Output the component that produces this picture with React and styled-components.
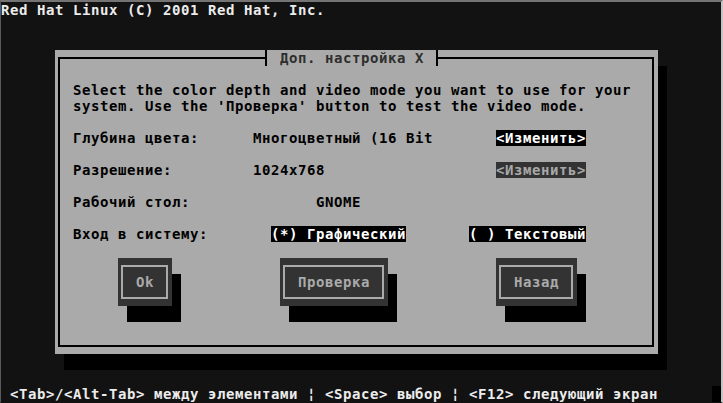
import React from 'react';
import styled, { createGlobalStyle, css } from 'styled-components';

// 80x25 text console, every cell is 9x16 px
const Global = createGlobalStyle`
  html, body {
    margin: 0;
    padding: 0;
    background: #121212;
  }
  body {
    width: 723px;
    height: 403px;
    overflow: hidden;
  }
`;

const Monitor = styled.div`
  width: 723px;
  height: 403px;
  box-sizing: border-box;
  border-top: 2px solid #747474;
  border-left: 1px solid #5a5a5a;
  border-right: 2px solid #c4c4c4;
  border-bottom: 1px solid #121212;
  background: #121212;
`;

const Screen = styled.div`
  display: grid;
  grid-template-columns: repeat(80, 9px);
  grid-template-rows: repeat(25, 16px);
  font-family: "DejaVu Sans Mono", "Liberation Mono", monospace;
  font-size: 14px;
  letter-spacing: 0.57px;
  font-weight: bold;
  line-height: 16px;
  color: #ececec;
  white-space: pre;
`;

const Banner = styled.div`
  grid-column: 1 / span 80;
  grid-row: 1;
`;

const HelpLine = styled.div`
  grid-column: 1 / span 79;
  grid-row: 25;
`;

const Cursor = styled.div`
  grid-column: 80;
  grid-row: 25;
  background: #000;
`;

const Dialog = styled.section`
  grid-column: 7 / span 67;
  grid-row: 4 / span 19;
  position: relative;
  display: grid;
  grid-template-columns: repeat(67, 9px);
  grid-template-rows: repeat(19, 16px);
  background: #aaaaaa;
  color: #000;
  box-shadow: 9px 16px 0 #000;

  &::before {
    content: '';
    position: absolute;
    left: 3px;
    right: 4px;
    top: 7px;
    bottom: 7px;
    border: 2px solid #000;
  }
`;

const Title = styled.h1`
  grid-column: 25 / span 18;
  grid-row: 1;
  position: relative;
  z-index: 1;
  margin: 0;
  font: inherit;
  color: #2e2e2e;
  background: #aaaaaa;

  &::before,
  &::after {
    content: '';
    position: absolute;
    top: 0;
    bottom: 0;
    box-sizing: border-box;
    background: #aaaaaa;
  }
  &::before {
    left: -6px;
    width: 6px;
    border-left: 2px solid #000;
  }
  &::after {
    left: 100%;
    width: 5px;
    border-right: 2px solid #000;
  }
`;

const tones = {
  plain: css`
    color: #000;
  `,
  focus: css`
    background: #000;
    color: #fff;
  `,
  dim: css`
    background: #333;
    color: #a8a8a8;
  `,
};

const Text = styled.span`
  grid-column: ${p => p.$col} / span ${p => p.$span};
  grid-row: ${p => p.$row};
  position: relative;
  z-index: 1;
  ${p => tones[p.$tone]}
`;

const Cell = ({ col, row, tone = 'plain', children }) => (
  <Text $col={col} $row={row} $span={children.length} $tone={tone}>
    {children}
  </Text>
);

const Button = styled.div`
  grid-column: ${p => p.$col} / span ${p => p.$span};
  grid-row: 14 / span 3;
  position: relative;
  z-index: 1;
  display: flex;
  align-items: center;
  justify-content: center;
  background: #333;
  color: #aaaaaa;
  box-shadow: 9px 16px 0 #000;

  &::before {
    content: '';
    position: absolute;
    left: 3px;
    right: 4px;
    top: 7px;
    bottom: 7px;
    border: 2px solid #aaaaaa;
  }
`;

const fields = [
  { row: 6, label: 'Глубина цвета:', value: 'Многоцветный (16 Bit', valueCol: 23, action: 'focus' },
  { row: 8, label: 'Разрешение:', value: '1024x768', valueCol: 23, action: 'dim' },
  { row: 10, label: 'Рабочий стол:', value: 'GNOME', valueCol: 30 },
];

const buttons = [
  { col: 8, span: 6, label: 'Ok' },
  { col: 26, span: 12, label: 'Проверка' },
  { col: 50, span: 9, label: 'Назад' },
];

export default function App() {
  return (
    <>
      <Global />
      <Monitor>
        <Screen>
          <Banner>Red Hat Linux (C) 2001 Red Hat, Inc.</Banner>

          <Dialog>
            <Title> Доп. настройка X </Title>

            <Cell col={3} row={3}>
              Select the color depth and video mode you want to use for your
            </Cell>
            <Cell col={3} row={4}>
              system. Use the 'Проверка' button to test the video mode.
            </Cell>

            {fields.map(f => (
              <React.Fragment key={f.row}>
                <Cell col={3} row={f.row}>{f.label}</Cell>
                <Cell col={f.valueCol} row={f.row}>{f.value}</Cell>
                {f.action && (
                  <Cell col={50} row={f.row} tone={f.action}>{'<Изменить>'}</Cell>
                )}
              </React.Fragment>
            ))}

            <Cell col={3} row={12}>Вход в систему:</Cell>
            <Cell col={25} row={12} tone="focus">(*) Графический</Cell>
            <Cell col={47} row={12} tone="focus">( ) Текстовый</Cell>

            {buttons.map(b => (
              <Button key={b.label} $col={b.col} $span={b.span}>
                {b.label}
              </Button>
            ))}
          </Dialog>

          <HelpLine>
            {' <Tab>/<Alt-Tab> между элементами ¦ <Space> выбор ¦ <F12> следующий экран'}
          </HelpLine>
          <Cursor />
        </Screen>
      </Monitor>
    </>
  );
}
